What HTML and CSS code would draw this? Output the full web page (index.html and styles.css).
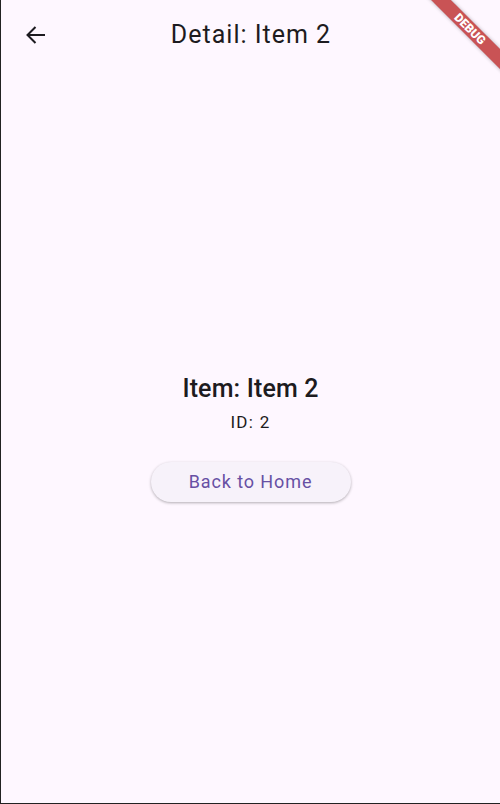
FILE: index.html
```html
<!DOCTYPE html>
<html>
<head>
<meta charset="utf-8">
<link rel="stylesheet" href="styles.css">
</head>
<body>
<div class="screen">
  <header class="appbar">
    <button class="back" aria-label="Back">
      <svg width="24" height="24" viewBox="0 0 24 24"><path d="M21 12H3.5M11.5 4L3.5 12l8 8" fill="none" stroke="#1D1B20" stroke-width="2"/></svg>
    </button>
    <h1 class="title">Detail: Item 2</h1>
  </header>
  <main class="content">
    <h2 class="item">Item: Item 2</h2>
    <p class="id">ID: 2</p>
    <button class="home">Back to Home</button>
  </main>
  <div class="banner"><span>DEBUG</span></div>
</div>
</body>
</html>
```
FILE: styles.css
```css
html, body {
  margin: 0;
  padding: 0;
}
body {
  width: 500px;
  height: 804px;
  overflow: hidden;
  background: #fef7ff;
  font-family: Roboto, "Noto Sans", sans-serif;
  color: #1d1b20;
}
.screen {
  position: relative;
  box-sizing: border-box;
  width: 500px;
  height: 804px;
  border-left: 1px solid #222;
  border-bottom: 1px solid #222;
  display: flex;
  flex-direction: column;
  overflow: hidden;
}
.appbar {
  height: 69px;
  flex: none;
  position: relative;
  display: flex;
  align-items: center;
  justify-content: center;
}
.back {
  position: absolute;
  left: 13px;
  top: 13px;
  width: 44px;
  height: 44px;
  border: 0;
  background: none;
  padding: 0;
  display: flex;
  align-items: center;
  justify-content: center;
}
.title {
  margin: 0;
  padding-left: 1px;
  font-size: 25px;
  font-weight: 400;
  letter-spacing: 1px;
  line-height: 32px;
}
.content {
  flex: 1;
  display: flex;
  flex-direction: column;
  align-items: center;
  justify-content: center;
  padding-top: 3px;
}
.item {
  margin: 0;
  font-size: 25px;
  font-weight: 500;
  letter-spacing: 0.15px;
  line-height: 30px;
}
.id {
  margin: 6px 0 0;
  font-size: 17px;
  letter-spacing: 1.3px;
  line-height: 24px;
}
.home {
  margin-top: 28px;
  width: 200px;
  height: 40px;
  border: 0;
  border-radius: 20px;
  background: #f7f2fa;
  color: #6750a4;
  font-family: Roboto, sans-serif;
  font-size: 18px;
  letter-spacing: 0.9px;
  box-shadow: 0 1px 3px rgba(0,0,0,0.3);
}
.banner {
  position: absolute;
  left: 409px;
  top: 22px;
  width: 120px;
  height: 14px;
  background: rgba(183, 28, 28, 0.75);
  transform: rotate(45deg);
  box-shadow: 0 0 4px rgba(0,0,0,0.3);
  display: flex;
  align-items: center;
  justify-content: center;
}
.banner span {
  color: #fff;
  font-size: 12px;
  font-weight: 900;
  line-height: 1;
}
```
